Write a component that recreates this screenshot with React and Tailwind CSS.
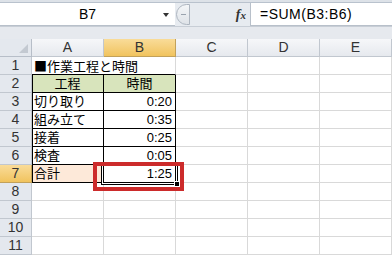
import React from "react";

const COLS = ["A", "B", "C", "D", "E"];

// 表の中身（A列, B列）
const DATA = {
  1: ["作業工程と時間", ""],
  2: ["工程", "時間"],
  3: ["切り取り", "0:20"],
  4: ["組み立て", "0:35"],
  5: ["接着", "0:25"],
  6: ["検査", "0:05"],
  7: ["合計", "1:25"],
};

const font = { fontFamily: '"Liberation Sans", "Noto Sans CJK JP", sans-serif' };

function Cell({ row, col }) {
  const inTable = row >= 2 && row <= 7 && col < 2;
  const val = DATA[row] ? DATA[row][col] : "";
  let cls = "relative h-[18px] border-r border-b border-[#d9d9d9] text-[13px] leading-[17px] text-black whitespace-nowrap";
  if (inTable) {
    cls = "relative h-[18px] border-r border-b border-black text-[13px] leading-[17px] text-black whitespace-nowrap";
    if (col === 0) cls += " shadow-[inset_1px_0_0_#000]";
  }
  if (row === 1 && col < 2) {
    cls = "relative h-[18px] border-b border-black text-[13px] leading-[17px] text-black whitespace-nowrap";
    if (col === 1) cls += " border-r border-r-[#d9d9d9]";
  }
  if (row === 2 && col < 2) cls += " bg-[#d8e4bc] text-center";
  if (row === 7 && col === 0) cls += " bg-[#fde9d9]";
  const right = inTable && row >= 3 && col === 1;
  return (
    <div className={cls}>
      {val && (
        <span
          className={
            row === 2
              ? "block"
              : right
              ? "block text-right pr-[3px]"
              : "absolute left-[2px] top-0 z-10"
          }
        >
          {row === 1 && (
            <span style={{ fontFamily: '"Noto Sans CJK JP", sans-serif' }}>■</span>
          )}
          {val}
        </span>
      )}
    </div>
  );
}

const headBase = "h-[18px] border-r border-b text-center text-[14px] leading-[17px] text-[#333]";

export default function App() {
  const rows = Array.from({ length: 11 }, (_, i) => i + 1);
  return (
    <div className="relative w-[392px] h-[259px] overflow-hidden bg-white" style={font}>
      {/* 上の帯 */}
      <div className="h-[3px] bg-[#dde2e8] border-b border-[#b9c2cd]" />

      {/* 数式バー */}
      <div className="flex h-[23px] bg-[#e7ebf0]">
        <div className="relative w-[175px] bg-white border-b border-[#b8c0ca] flex items-center justify-center text-[14px] text-black">
          B7
          <span className="absolute right-[6px] top-[10px] w-0 h-0 border-l-[3px] border-r-[3px] border-t-[4px] border-l-transparent border-r-transparent border-t-[#333]" />
        </div>
        <div className="relative w-[75px] flex items-center">
          <div className="ml-[1px] w-[14px] h-[21px] rounded-l-full border border-[#aeb6c0] bg-gradient-to-b from-[#f4f6f8] to-[#dfe3e8] flex items-center justify-center">
            <span className="w-[5px] h-[1px] bg-[#9aa3ae]" />
          </div>
          <span
            className="ml-auto mr-[4px] text-[14px] italic font-bold text-[#333]"
            style={{ fontFamily: '"Liberation Serif", serif' }}
          >
            f<span className="text-[11px]">x</span>
          </span>
        </div>
        <div className="flex-1 bg-white border-l border-b border-[#b8c0ca] flex items-center pl-[9px] text-[14px] text-black tracking-[0.5px]">
          =SUM(B3:B6)
        </div>
      </div>

      {/* 帯 */}
      <div className="h-[13px] bg-[#e6e9ee] border-t border-[#c8ced6]" />

      {/* シート */}
      <div className="grid grid-cols-[32px_72px_72px_72px_72px_72px]">
        {/* 列見出し */}
        <div className="relative h-[18px] bg-[#e4e8ee] border-r border-b border-[#b7bec8]">
          <span
            className="absolute right-[3px] bottom-[3px] w-0 h-0"
            style={{ borderLeft: "9px solid transparent", borderBottom: "9px solid #c3c9d1" }}
          />
        </div>
        {COLS.map((c) => (
          <div
            key={c}
            className={
              c === "B"
                ? headBase + " bg-gradient-to-b from-[#f9dc98] to-[#f1c35d] border-[#c2a15a]"
                : headBase + " bg-gradient-to-b from-[#f6f7f9] to-[#e6e9ee] border-[#c1c7cf]"
            }
          >
            {c}
          </div>
        ))}

        {rows.map((r) => (
          <React.Fragment key={r}>
            <div
              className={
                r === 7
                  ? headBase + " bg-gradient-to-b from-[#f9dc98] to-[#f1c35d] border-[#c2a15a]"
                  : headBase + " bg-[#e4e8ee] border-[#c1c7cf]"
              }
            >
              {r}
            </div>
            {COLS.map((c, ci) => (
              <Cell key={c} row={r} col={ci} />
            ))}
          </React.Fragment>
        ))}
      </div>

      {/* 選択枠 */}
      <div className="absolute left-[101px] top-[163px] w-[77px] h-[22px] border border-black shadow-[inset_0_0_0_1px_#fff,inset_0_0_0_2px_#000] pointer-events-none" />
      <div className="absolute left-[174px] top-[181px] w-[6px] h-[6px] bg-black border border-white" />

      {/* 赤枠 */}
      <div className="absolute left-[93px] top-[162px] w-[91px] h-[29px] border-[4px] border-[#cc2b2b]" />
    </div>
  );
}
